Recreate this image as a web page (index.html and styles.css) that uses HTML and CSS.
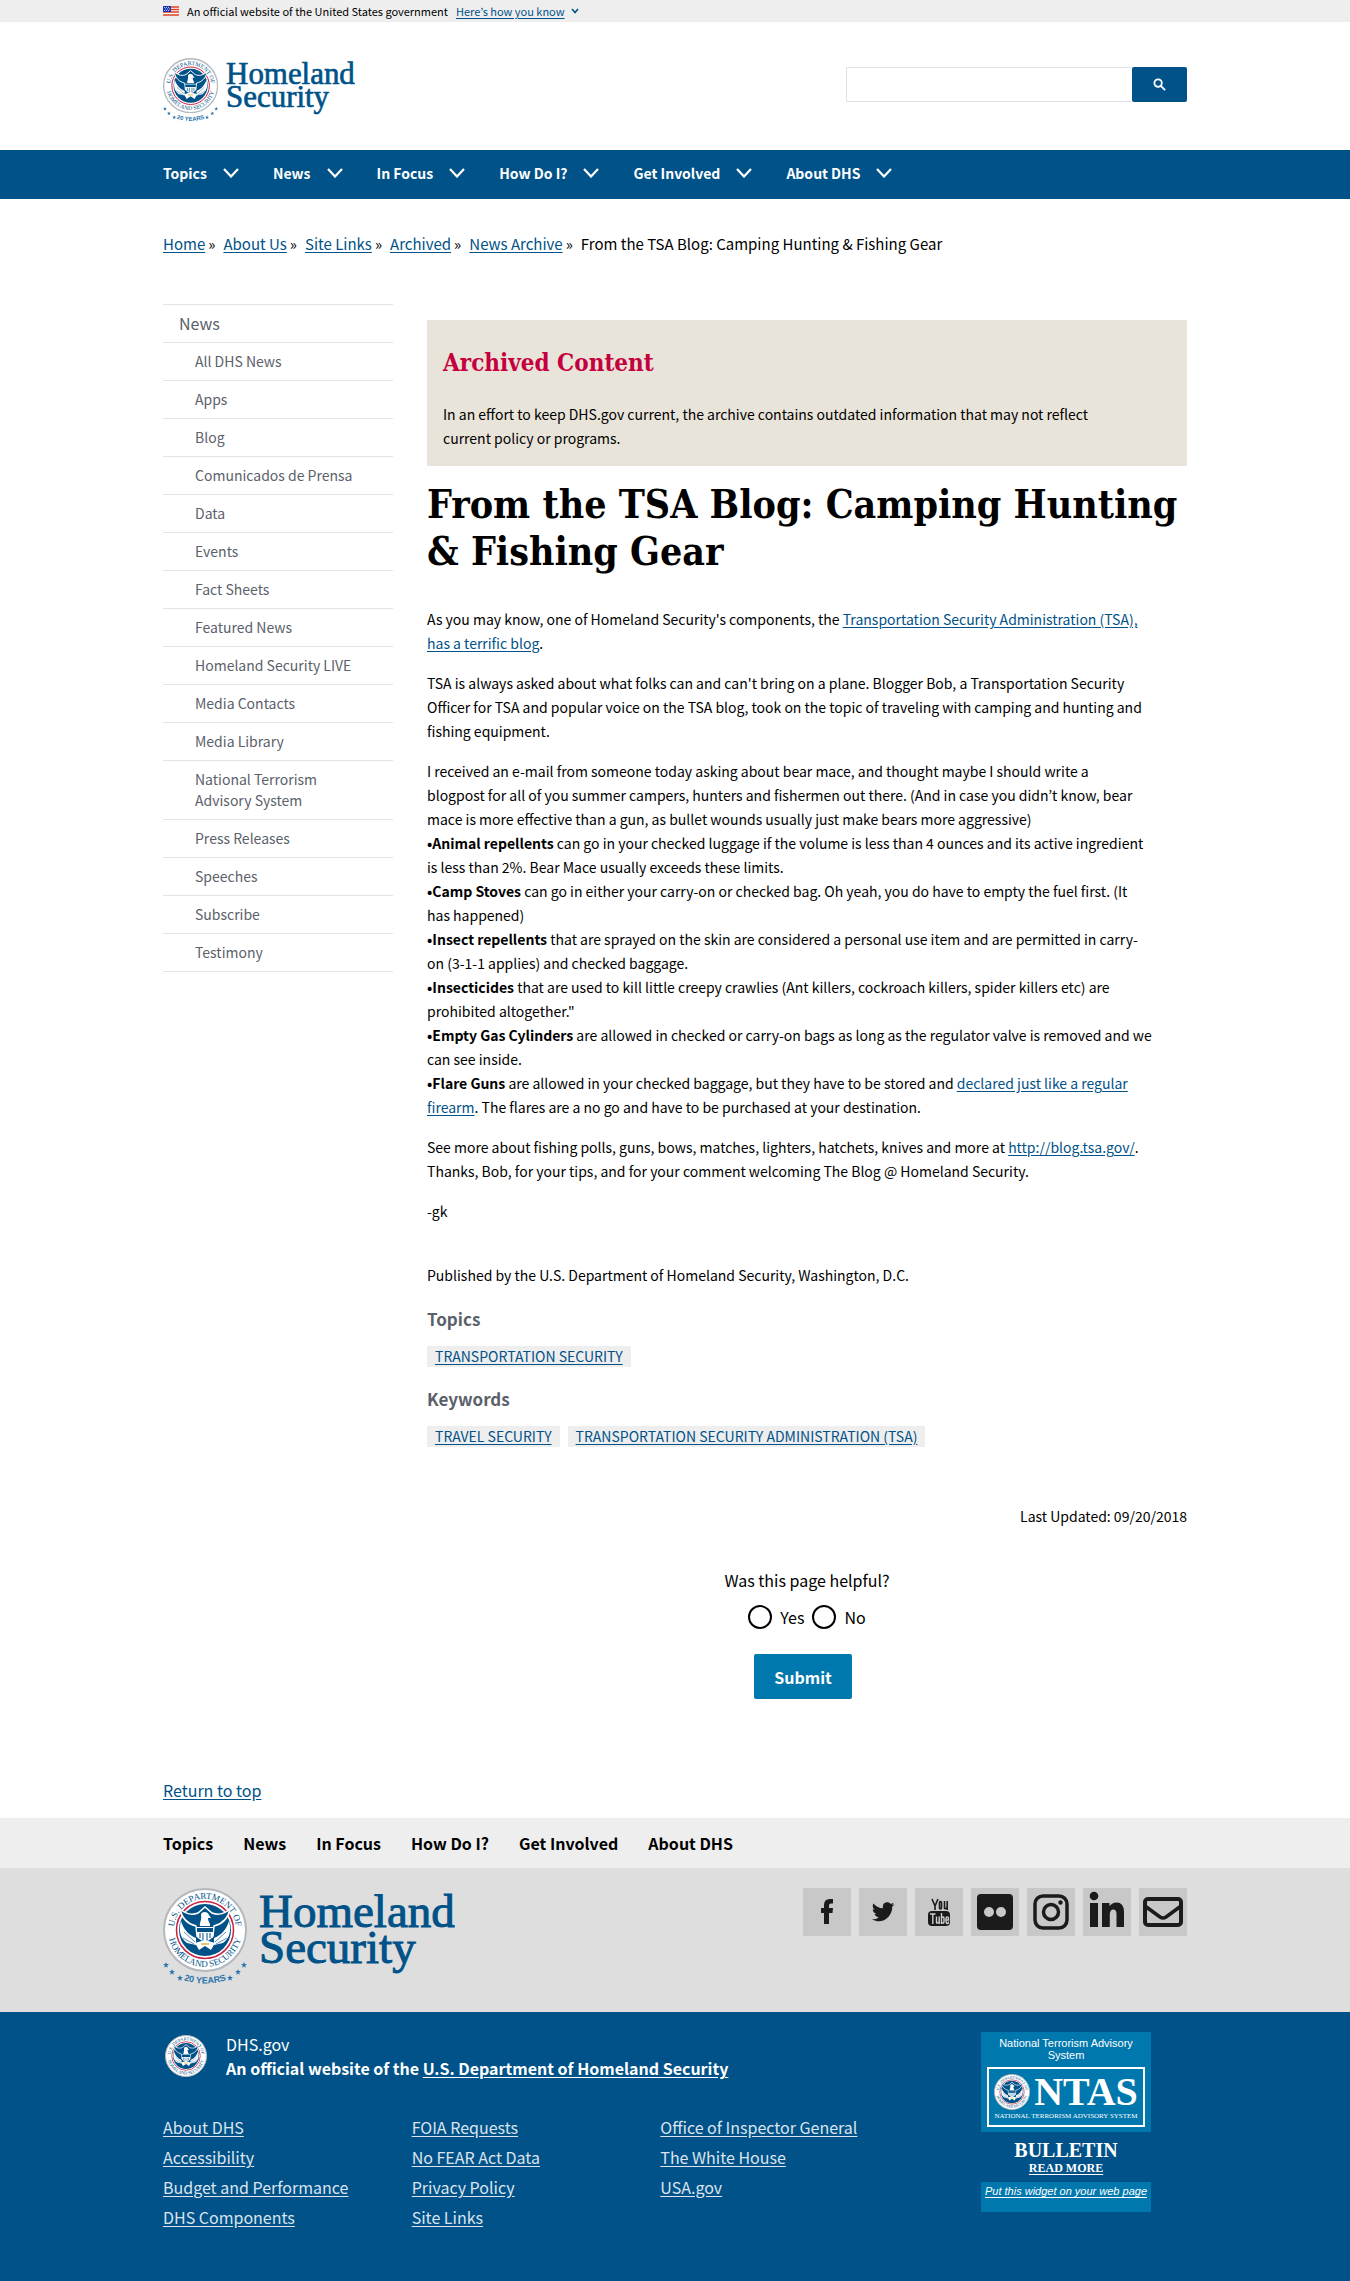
FILE: index.html
```html
<!DOCTYPE html>
<html lang="en">
<head>
<meta charset="utf-8">
<meta name="viewport" content="width=device-width, initial-scale=1">
<title>From the TSA Blog: Camping Hunting &amp; Fishing Gear | Homeland Security</title>
<link rel="stylesheet" href="styles.css">
</head>
<body id="top">
<svg class="defs" width="0" height="0" aria-hidden="true">
  <defs>
    <path id="arc-top" d="M13.500 54A31 31 0 1 1 70.500 54"/>
    <path id="arc-bottom" d="M5 42A37 37 0 0 0 79 42"/>
    <path id="arc-years" d="M20 92Q42 99 64 92"/>
    <path id="star" d="M0-3L.8-.9 3-.9 1.200.5 1.900 2.700 0 1.400-1.900 2.700-1.200.5-3-.9-.8-.9Z"/>
    <symbol id="seal" viewBox="0 0 84 84">
      <circle cx="42" cy="42" r="41" fill="#fff" stroke="#b4b8bc" stroke-width="2"/>
      <circle cx="42" cy="42" r="28.500" fill="#fff" stroke="#c8213f" stroke-width="1.500"/>
      <circle cx="42" cy="42" r="26" fill="#005288"/>
      <path d="M17 21C19 31 25 36 33 38L34 48C36 51 48 51 50 48L51 38C59 36 65 31 67 21C60 27 54 27 49 25L42 19L35 25C30 27 24 27 17 21Z" fill="#005288" stroke="#fff" stroke-width="1.500"/>
      <path d="M38 27C38 23 45 23 46 27L48 30 45 30C45 34 48 36 47 38L37 38C36 35 39 32 38 27Z" fill="#fff"/>
      <path d="M34 39H50V48Q48 52 42 54Q36 52 34 48Z" fill="#fff"/>
      <path d="M34 40H50V44H34Z" fill="#005288"/>
      <path d="M37 45V50M40 45V53M44 45V53M47 45V50" stroke="#005288"/>
      <path d="M33 50C25 47 20 40 18 33C15 43 18 51 24 55L33 57ZM51 50C59 47 64 40 66 33C69 43 66 51 60 55L51 57Z" fill="#fff"/>
      <path d="M21 44L32 54M20 50L31 56M63 44L52 54M64 50L53 56" stroke="#5f91b8"/>
      <path d="M32 55L42 52 52 55 48 62 42 58 36 62Z" fill="#fff"/>
      <path d="M38 56H46" stroke="#d7b94d" stroke-width="1.500"/>
      <text class="seal-text"><textPath href="#arc-top" startOffset="50%">U.S. DEPARTMENT OF</textPath></text>
      <text class="seal-text"><textPath href="#arc-bottom" startOffset="50%">HOMELAND SECURITY</textPath></text>
    </symbol>
    <symbol id="logo" viewBox="0 0 292 100">
      <use href="#seal" x="0" y="0" width="84" height="84"/>
      <g fill="#2a74ab">
        <use href="#star" x="3" y="77"/><use href="#star" x="9" y="84"/><use href="#star" x="17" y="90"/>
        <use href="#star" x="67" y="90"/><use href="#star" x="75" y="84"/><use href="#star" x="81" y="77"/>
      </g>
      <text class="years-text"><textPath href="#arc-years" startOffset="50%">20 YEARS</textPath></text>
      <text class="word-text" x="96" y="39">Homeland</text>
      <text class="word-text" x="96" y="75">Security</text>
    </symbol>
    <symbol id="chevron" viewBox="0 0 16 10">
      <path d="M1 1L8 8.500L15 1" fill="none" stroke="currentColor" stroke-width="2.200"/>
    </symbol>
  </defs>
</svg>

<div class="banner">
  <div class="wrap banner-row">
    <svg class="flag" viewBox="0 0 16 10" aria-hidden="true"><path fill="#fff" d="M0 0H16V10H0Z"/><path d="M0 1H16M0 3.500H16M0 6H16M0 9H16" stroke="#db3e1f" stroke-width="1.500"/><path fill="#1e33b1" d="M0 0H8V6H0Z"/><path d="M1 1.500H7M2 3H7M1 4.500H7" stroke="#fff" stroke-width=".7" stroke-dasharray="1 1"/></svg>
    <span>An official website of the United States government</span>
    <button class="banner-toggle" type="button"><span class="underlined">Here’s how you know</span><svg class="banner-chevron" viewBox="0 0 8 6" aria-hidden="true"><path d="M1 1L4 4.500L7 1" fill="none" stroke="currentColor" stroke-width="1.600"/></svg></button>
  </div>
</div>

<header>
  <div class="wrap header-row">
    <a href="#" aria-label="Homeland Security home"><svg class="logo" aria-hidden="true"><use href="#logo"/></svg></a>
    <form class="search" role="search">
      <input class="search-input" type="search" aria-label="Search">
      <button class="search-button" type="submit" aria-label="Search"><svg class="search-icon" viewBox="0 0 14 14" aria-hidden="true"><circle cx="5.500" cy="5.500" r="4" fill="none" stroke="#fff" stroke-width="2"/><path d="M8.500 8.500L13 13" stroke="#fff" stroke-width="2"/></svg></button>
    </form>
  </div>
  <nav class="primary" aria-label="Primary">
    <div class="wrap primary-row">
      <button type="button">Topics<svg aria-hidden="true"><use href="#chevron"/></svg></button>
      <button type="button">News<svg aria-hidden="true"><use href="#chevron"/></svg></button>
      <button type="button">In Focus<svg aria-hidden="true"><use href="#chevron"/></svg></button>
      <button type="button">How Do I?<svg aria-hidden="true"><use href="#chevron"/></svg></button>
      <button type="button">Get Involved<svg aria-hidden="true"><use href="#chevron"/></svg></button>
      <button type="button">About DHS<svg aria-hidden="true"><use href="#chevron"/></svg></button>
    </div>
  </nav>
</header>

<div class="wrap">
  <nav aria-label="Breadcrumb">
    <ol class="breadcrumb">
      <li><a href="#">Home</a></li>
      <li><a href="#">About Us</a></li>
      <li><a href="#">Site Links</a></li>
      <li><a href="#">Archived</a></li>
      <li><a href="#">News Archive</a></li>
      <li>From the TSA Blog: Camping Hunting &amp; Fishing Gear</li>
    </ol>
  </nav>

  <div class="columns">
    <nav class="sidebar" aria-label="News">
      <a class="side-title" href="#">News</a>
      <ul>
        <li><a href="#">All DHS News</a></li>
        <li><a href="#">Apps</a></li>
        <li><a href="#">Blog</a></li>
        <li><a href="#">Comunicados de Prensa</a></li>
        <li><a href="#">Data</a></li>
        <li><a href="#">Events</a></li>
        <li><a href="#">Fact Sheets</a></li>
        <li><a href="#">Featured News</a></li>
        <li><a href="#">Homeland Security LIVE</a></li>
        <li><a href="#">Media Contacts</a></li>
        <li><a href="#">Media Library</a></li>
        <li><a href="#">National Terrorism Advisory System</a></li>
        <li><a href="#">Press Releases</a></li>
        <li><a href="#">Speeches</a></li>
        <li><a href="#">Subscribe</a></li>
        <li><a href="#">Testimony</a></li>
      </ul>
    </nav>

    <main class="content">
      <section class="archived">
        <h2>Archived Content</h2>
        <p>In an effort to keep DHS.gov current, the archive contains outdated information that may not reflect current policy or programs.</p>
      </section>
      <h1>From the TSA Blog: Camping Hunting &amp; Fishing Gear</h1>
      <article class="body-text">
        <p>As you may know, one of Homeland Security's components, the <a href="#">Transportation Security Administration (TSA), has a terrific blog</a>.</p>
        <p>TSA is always asked about what folks can and can't bring on a plane. Blogger Bob, a Transportation Security Officer for TSA and popular voice on the TSA blog, took on the topic of traveling with camping and hunting and fishing equipment.</p>
        <p>I received an e-mail from someone today asking about bear mace, and thought maybe I should write a<br>
        blogpost for all of you summer campers, hunters and fishermen out there. (And in case you didn’t know, bear mace is more effective than a gun, as bullet wounds usually just make bears more aggressive)<br>
        <strong>•Animal repellents</strong> can go in your checked luggage if the volume is less than 4 ounces and its active ingredient is less than 2%. Bear Mace usually exceeds these limits.<br>
        <strong>•Camp Stoves</strong> can go in either your carry-on or checked bag. Oh yeah, you do have to empty the fuel first. (It<br>
        has happened)<br>
        <strong>•Insect repellents</strong> that are sprayed on the skin are considered a personal use item and are permitted in carry-<br>on (3-1-1 applies) and checked baggage.<br>
        <strong>•Insecticides</strong> that are used to kill little creepy crawlies (Ant killers, cockroach killers, spider killers etc) are prohibited altogether."<br>
        <strong>•Empty Gas Cylinders</strong> are allowed in checked or carry-on bags as long as the regulator valve is removed and we can see inside.<br>
        <strong>•Flare Guns</strong> are allowed in your checked baggage, but they have to be stored and <a href="#">declared just like a regular firearm</a>. The flares are a no go and have to be purchased at your destination.</p>
        <p>See more about fishing polls, guns, bows, matches, lighters, hatchets, knives and more at <a href="#">http://blog.tsa.gov/</a>. Thanks, Bob, for your tips, and for your comment welcoming The Blog @ Homeland Security.</p>
        <p>-gk</p>
      </article>
      <p class="published">Published by the U.S. Department of Homeland Security, Washington, D.C.</p>
      <section class="tags">
        <h3>Topics</h3>
        <ul><li><a href="#">Transportation Security</a></li></ul>
      </section>
      <section class="tags">
        <h3>Keywords</h3>
        <ul><li><a href="#">Travel Security</a></li><li><a href="#">Transportation Security Administration (TSA)</a></li></ul>
      </section>
      <p class="updated">Last Updated: 09/20/2018</p>
      <form class="helpful">
        <fieldset>
          <legend>Was this page helpful?</legend>
          <div class="choices">
            <label><input type="radio" name="helpful" value="yes">Yes</label>
            <label><input type="radio" name="helpful" value="no">No</label>
          </div>
        </fieldset>
        <button class="submit" type="submit">Submit</button>
      </form>
    </main>
  </div>
  <p class="return"><a href="#top">Return to top</a></p>
</div>

<footer>
  <nav class="footer-nav" aria-label="Footer">
    <div class="wrap footer-nav-row">
      <a href="#">Topics</a><a href="#">News</a><a href="#">In Focus</a><a href="#">How Do I?</a><a href="#">Get Involved</a><a href="#">About DHS</a>
    </div>
  </nav>
  <div class="footer-brand">
    <div class="wrap brand-row">
      <svg class="logo-large" role="img" aria-label="Homeland Security"><use href="#logo"/></svg>
      <div class="social">
        <a href="#" aria-label="Facebook"><svg viewBox="0 0 48 48"><path d="M21 36V25H18V20H21V17Q21 11 27 11H30V15.500H28Q26 15.500 26 17.500V20H30L29.500 25H26V36Z"/></svg></a>
        <a href="#" aria-label="Twitter"><svg viewBox="0 0 48 48"><path d="M35.500 16.200a9 9 0 0 1-2.300 2.500C33.500 27 26.500 34 18.500 33.200Q15.500 33 13 31.300Q17 31.500 19.700 29.400Q16.600 29 15.500 26.200L17.500 26.100Q14 25 13.700 21.300L15.700 21.900Q12.500 19 14.400 15.500Q18.500 20 24 20.300C22.800 14.500 28.800 12.800 31.700 15.900L34.700 14.800Q34.200 16.300 32.800 17.200Z"/></svg></a>
        <a href="#" aria-label="YouTube"><svg viewBox="0 0 48 48"><path d="M17 11L20 18V22M23 11L20 18M24.500 14.500Q24.500 13.500 25.500 13.500T26.500 14.500V20Q26.500 21 25.500 21T24.500 20ZM29.500 13V20Q29.500 21.500 32 19.500M32.200 13V22" fill="none" stroke="#1b1b1b" stroke-width="1.600"/><rect x="13" y="23" width="22" height="15" rx="4"/><path d="M15 26H20.500M17.800 26V36M21.500 28.500V34.500Q21.500 36 24 34M24.200 28.500V36M26.500 25V36M26.500 29.500Q29 28 29 30.500V33.500Q29 36 26.500 34.500M33.500 33.500Q33.500 35.500 32.300 35.500T31 33.500V30.500Q31 29 32.300 29T33.500 30.500V32H31" fill="none" stroke="#d0d0d0" stroke-width="1.400"/></svg></a>
        <a href="#" aria-label="Flickr"><svg viewBox="0 0 48 48"><path fill-rule="evenodd" d="M10 6H38Q42 6 42 10V38Q42 42 38 42H10Q6 42 6 38V10Q6 6 10 6ZM18 19A5 5 0 1 0 18 29A5 5 0 1 0 18 19ZM30 19A5 5 0 1 0 30 29A5 5 0 1 0 30 19Z"/></svg></a>
        <a href="#" aria-label="Instagram"><svg viewBox="0 0 48 48"><rect x="8" y="8" width="32" height="32" rx="8" fill="none" stroke="#1b1b1b" stroke-width="3.500"/><circle cx="24" cy="24" r="7.500" fill="none" stroke="#1b1b1b" stroke-width="3.500"/><circle cx="33.500" cy="14.500" r="2.200"/></svg></a>
        <a href="#" aria-label="LinkedIn"><svg viewBox="0 0 48 48"><circle cx="11" cy="8" r="4.300"/><path d="M7 15H15V39H7ZM19 15H26.500V18.300Q29 14.500 33.500 14.500Q41 14.500 41 24V39H33.500V26Q33.500 21.500 30.300 21.500T26.800 26V39H19Z"/></svg></a>
        <a href="#" aria-label="Email"><svg viewBox="0 0 48 48"><rect x="6" y="11" width="36" height="26" rx="3" fill="none" stroke="#1b1b1b" stroke-width="4"/><path d="M6 18L21 29Q24 31 27 29L42 18" fill="none" stroke="#1b1b1b" stroke-width="3.500"/></svg></a>
      </div>
    </div>
  </div>
  <div class="footer-main">
    <div class="wrap footer-grid">
      <div>
        <div class="agency">
          <svg class="seal-small" aria-hidden="true"><use href="#seal"/></svg>
          <div>
            <p>DHS.gov</p>
            <p><strong>An official website of the <a href="#">U.S. Department of Homeland Security</a></strong></p>
          </div>
        </div>
        <div class="footer-links">
          <ul><li><a href="#">About DHS</a></li><li><a href="#">Accessibility</a></li><li><a href="#">Budget and Performance</a></li><li><a href="#">DHS Components</a></li></ul>
          <ul><li><a href="#">FOIA Requests</a></li><li><a href="#">No FEAR Act Data</a></li><li><a href="#">Privacy Policy</a></li><li><a href="#">Site Links</a></li></ul>
          <ul><li><a href="#">Office of Inspector General</a></li><li><a href="#">The White House</a></li><li><a href="#">USA.gov</a></li></ul>
        </div>
      </div>
      <aside class="ntas">
        <div class="ntas-top">
          <p>National Terrorism Advisory System</p>
          <div class="ntas-box">
            <div class="ntas-mark"><svg class="ntas-seal" aria-hidden="true"><use href="#seal"/></svg><span>NTAS</span></div>
            <small>NATIONAL TERRORISM ADVISORY SYSTEM</small>
          </div>
        </div>
        <div class="ntas-bulletin"><strong>BULLETIN</strong><a href="#">READ MORE</a></div>
        <div class="ntas-bottom"><a href="#">Put this widget on your web page</a></div>
      </aside>
    </div>
  </div>
</footer>
</body>
</html>
```
FILE: styles.css
```css
* { box-sizing: border-box; }
body {
  margin: 0;
  color: #000;
  background: #fff;
  font: 14px/24px "Noto Sans CJK KR", "Noto Sans", sans-serif;
}
p, h1, h2, h3, ul, ol, fieldset { margin: 0; padding: 0; }
ul, ol { list-style: none; }
fieldset { border: 0; }
button { font: inherit; cursor: pointer; }
a { color: #005288; text-underline-offset: 2px; }
svg { display: block; }
.defs { position: absolute; }
.wrap { max-width: 1024px; margin: 0 auto; }

.seal-text { font: 9px "Liberation Serif", serif; fill: #005288; text-anchor: middle; }
.years-text { font: bold 9px "Liberation Sans", sans-serif; fill: #2a74ab; text-anchor: middle; }
.word-text { font: 47px "Liberation Serif", serif; fill: #005288; stroke: #005288; stroke-width: 1px; }

/* Government banner */
.banner { background: #eee; font-size: 11px; line-height: 22px; }
.banner-row { display: flex; align-items: center; gap: 8px; }
.flag { width: 16px; height: 10px; }
.banner-toggle { display: flex; align-items: center; gap: 6px; padding: 0; border: 0; background: none; color: #005288; }
.underlined { text-decoration: underline; text-underline-offset: 2px; }
.banner-chevron { width: 8px; height: 6px; }

/* Header */
.header-row { display: flex; justify-content: space-between; align-items: flex-start; height: 128px; padding-top: 36px; }
.logo { width: 192px; height: 66px; }
.search { display: flex; margin-top: 9px; }
.search-input { width: 286px; height: 35px; border: 1px solid #dfe1e5; border-right: 0; border-radius: 2px 0 0 2px; padding: 0 8px; font: inherit; }
.search-button { display: grid; place-items: center; width: 55px; height: 35px; padding: 0; border: 0; border-radius: 2px; background: #005288; }
.search-icon { width: 13px; height: 13px; }
.primary { background: #005288; }
.primary-row { display: flex; gap: 34px; height: 49px; padding-bottom: 3px; align-items: center; }
.primary button { display: flex; align-items: center; gap: 16px; padding: 0; border: 0; background: none; color: #fff; font-weight: 700; }
.primary svg { width: 16px; height: 10px; }

.breadcrumb { display: flex; flex-wrap: wrap; padding: 33px 0 48px; font-size: 15px; }
.breadcrumb li:not(:last-child)::after { content: "»"; margin: 0 8px 0 3px; }

/* Sidebar and content */
.columns { display: grid; grid-template-columns: 230px minmax(0, 1fr); gap: 34px; }
.sidebar a { display: block; color: #5b616b; text-decoration: none; line-height: 21px; }
.sidebar .side-title { padding: 8px 16px; border-top: 1px solid #e4e4e4; font-size: 16px; }
.sidebar li { border-top: 1px solid #e4e4e4; padding: 8px 48px 8px 32px; }
.sidebar li:nth-child(4), .sidebar li:nth-child(9) { padding-right: 16px; }
.sidebar li:last-child { border-bottom: 1px solid #e4e4e4; }

.archived { margin-top: 16px; padding: 28px 56px 16px 16px; background: #e9e4d9; }
h1, h2 { font-family: "DejaVu Serif Condensed", "DejaVu Serif", serif; font-stretch: condensed; }
h2 { color: #c5003e; font-size: 24px; line-height: 30px; margin-bottom: 24px; }
h1 { margin: 15px 0 32px; font-size: 39px; line-height: 47px; }
.body-text { display: grid; gap: 16px; padding-right: 31px; }
.published { margin-top: 40px; }
.tags { margin-top: 18px; }
.tags h3 { color: #5b616b; font-size: 17px; line-height: 28px; margin-bottom: 13px; }
.tags ul { display: flex; flex-wrap: wrap; gap: 8px; }
.tags li { padding: 0 8px; background: #eee; line-height: 21px; text-transform: uppercase; }
.updated { margin-top: 57px; text-align: right; }
.helpful { display: flex; flex-direction: column; align-items: center; gap: 25px; margin-top: 40px; font-size: 16px; }
.helpful legend { padding: 0; }
.choices { display: flex; justify-content: center; gap: 8px; margin-top: 13px; }
.choices label { display: flex; align-items: center; gap: 8px; }
.choices input { appearance: none; width: 24px; height: 24px; margin: 0; border: 2px solid #000; border-radius: 50%; background: #fff; }
.submit { width: 98px; height: 45px; margin-right: 8px; border: 0; border-radius: 2px; background: #0078ae; color: #fff; font-weight: 700; }
.return { padding: 79px 0 16px; font-size: 16px; }

/* Footer */
.footer-nav { background: #eee; }
.footer-nav-row { display: flex; flex-wrap: wrap; gap: 30px; padding: 13px 0; }
.footer-nav a { color: #000; font-size: 16px; font-weight: 700; text-decoration: none; }
.footer-brand { background: #dedede; }
.brand-row { display: flex; justify-content: space-between; padding: 20px 0 24px; }
.logo-large { width: 292px; height: 100px; }
.social { display: flex; gap: 8px; }
.social a { width: 48px; height: 48px; background: #c8c8c8; }
.social svg { width: 48px; height: 48px; fill: #1b1b1b; }
.footer-main { background: #005288; color: #fff; font-size: 16px; padding: 20px 0 49px; }
.footer-grid { display: grid; grid-template-columns: 746px 170px; justify-content: space-between; padding-right: 36px; }
.footer-main a { color: #dce4ef; }
.agency { display: flex; gap: 19px; }
.agency svg { margin: 3px 0 0 2px; }
.agency strong a { color: #fff; }
.seal-small { width: 42px; height: 42px; }
.footer-links { display: grid; grid-template-columns: repeat(3, 1fr); margin-top: 32px; line-height: 30px; }
.ntas { font: 11px/12px "Liberation Sans", sans-serif; text-align: center; }
.ntas-top { padding: 5px 6px; background: #0078ae; }
.ntas-top p { padding: 0 8px; }
.ntas-box { margin-top: 6px; padding: 4px; border: 2px solid #fff; font-family: "Liberation Serif", serif; }
.ntas-mark { display: flex; align-items: center; justify-content: center; gap: 4px; font-size: 40px; font-weight: 700; line-height: 38px; }
.ntas-seal { width: 36px; height: 36px; }
.ntas-box small { display: block; font-size: 7px; line-height: 10px; white-space: nowrap; }
.ntas-bulletin { display: flex; flex-direction: column; align-items: center; height: 50px; padding-top: 7px; font-family: "Liberation Serif", serif; font-weight: 700; }
.ntas-bulletin strong { font-size: 20px; line-height: 22px; }
.ntas-bulletin a { color: #fff; font-size: 12px; line-height: 14px; }
.ntas-bottom { height: 30px; padding-top: 3px; background: #0078ae; font-style: italic; white-space: nowrap; }
.ntas-bottom a { color: #fff; }
```
